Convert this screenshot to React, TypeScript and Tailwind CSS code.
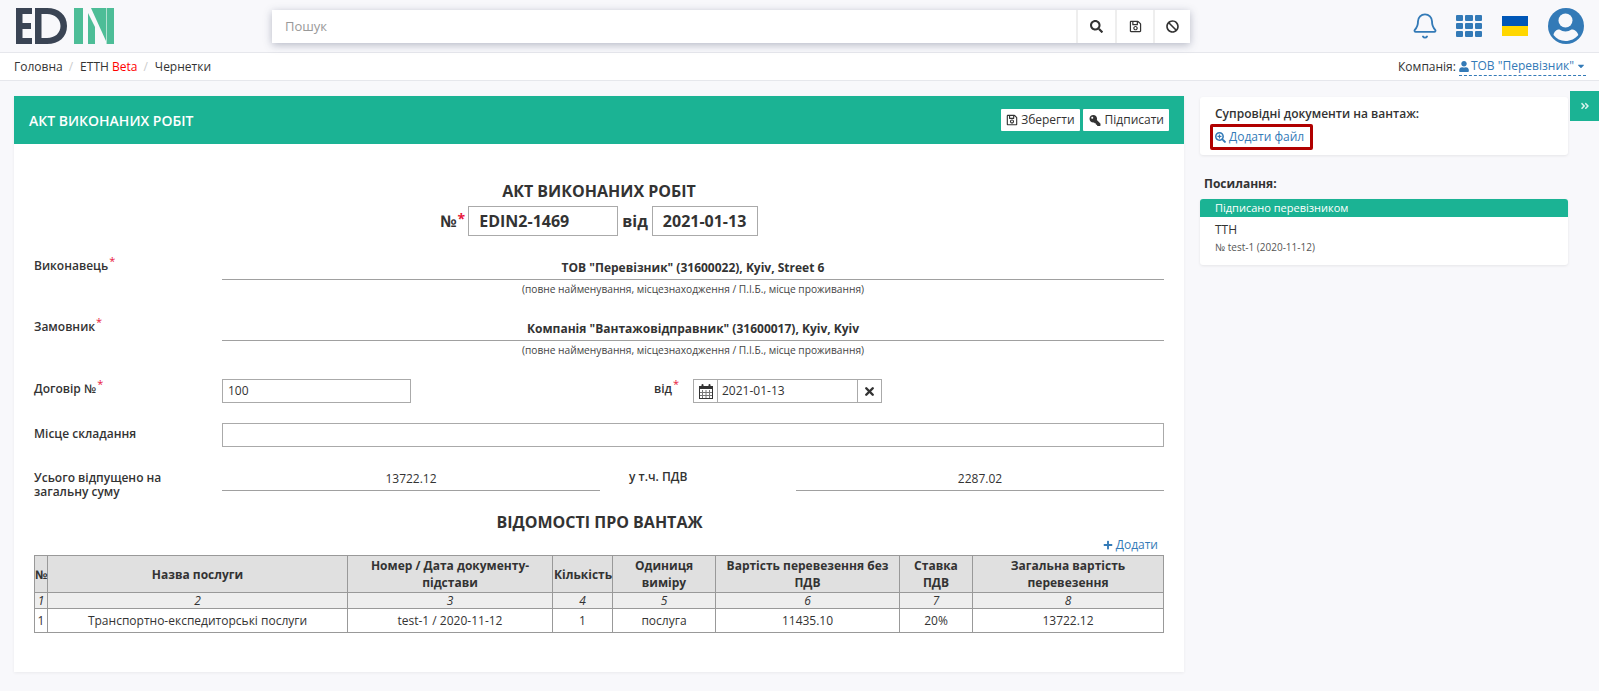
import { FaSearch, FaRegSave, FaBan, FaUser, FaKey, FaSearchPlus, FaPlus, FaAngleDoubleRight, FaCaretDown } from 'react-icons/fa';
import { Bell, X } from 'lucide-react';

const Star = () => <sup className="text-[#e8173c] text-[11px] font-normal ml-px relative -top-[5px]">*</sup>;

function Logo() {
    return (
        <svg width="98" height="36" viewBox="0 0 98 36" className="shrink-0">
            <g fill="#3a4454">
                <rect x="0" y="0" width="6.500" height="36" />
                <rect x="0" y="0" width="16" height="6" />
                <rect x="0" y="15" width="15" height="6" />
                <rect x="0" y="30" width="16" height="6" />
                <path d="M19 0h12c12 0 20 7 20 18s-8 18-20 18H19zM25.500 6v24H31c8 0 13.500-5 13.500-12S39 6 31 6z" />
            </g>
            <g fill="#4dbd97">
                <rect x="58" y="0" width="9" height="36" />
                <path d="M72 5l7 14v17h-7z" />
                <path d="M75 0h15v33z" />
                <rect x="90.600" y="0" width="7.400" height="36" />
            </g>
        </svg>
    );
}

function AppsGrid() {
    return (
        <div className="grid grid-cols-3 gap-[2px] w-[26px]">
            {Array.from({ length: 9 }).map((_, i) => (
                <div key={i} className="h-[6px] bg-[#337ab7] rounded-[1px]" />
            ))}
        </div>
    );
}

function Avatar() {
    return (
        <svg width="36" height="36" viewBox="0 0 36 36" className="shrink-0">
            <circle cx="18" cy="18" r="18" fill="#337ab7" />
            <circle cx="17.500" cy="12.500" r="7" fill="#f8f8fb" />
            <path d="M5.500 27c.5-3.500 3-5.500 6-5.500 1.800 1.300 3.800 2 6 2s4.200-.7 6-2c3 0 6 2 6.800 5.500-3 3.800-7.800 6-12.800 6s-9-2.200-12-6z" fill="#f8f8fb" />
        </svg>
    );
}

function CalendarIcon() {
    return (
        <svg width="14" height="15" viewBox="0 0 14 15" className="shrink-0">
            <rect x="0.500" y="2.500" width="13" height="12" fill="#fff" stroke="#333" />
            <rect x="0.500" y="2.500" width="13" height="2" fill="#333" stroke="#333" />
            <rect x="2.500" y="0" width="2" height="4" rx="1" fill="#333" />
            <rect x="9.500" y="0" width="2" height="4" rx="1" fill="#333" />
            <path d="M3.500 6v8M7 6v8M10.500 6v8M1 8.500h12M1 11.500h12" stroke="#777" strokeWidth="1" fill="none" />
        </svg>
    );
}

const columns = [
    { title: 'Назва послуги', w: 'w-[300px]' },
    { title: 'Номер / Дата документу-підстави', w: 'w-[205px]' },
    { title: 'Кількість', w: 'w-[60px]' },
    { title: 'Одиниця виміру', w: 'w-[103px]' },
    { title: 'Вартість перевезення без ПДВ', w: 'w-[184px]' },
    { title: 'Ставка ПДВ', w: 'w-[73px]' },
    { title: 'Загальна вартість перевезення', w: 'w-[191px]' },
];

const row = ['Транспортно-експедиторські послуги', 'test-1 / 2020-11-12', '1', 'послуга', '11435.10', '20%', '13722.12'];

function PartyRow({ label, value }: { label: string; value: string }) {
    return (
        <div className="flex h-[61px]">
            <div className="w-[188px] font-semibold pt-[2px] shrink-0">{label}<Star /></div>
            <div className="flex-1 text-center">
                <div className="font-bold border-b border-[#a0a0a0] h-[25px] leading-[22px] pt-[2px]">{value}</div>
                <div className="text-[10.200px] text-[#444] leading-[19px]">(повне найменування, місцезнаходження / П.І.Б., місце проживання)</div>
            </div>
        </div>
    );
}

export default function App() {
    return (
        <div className="relative min-h-[691px] bg-[#f8f8fb] text-[#333] text-[12px] overflow-hidden" style={{ fontFamily: '"Open Sans", "Noto Sans", sans-serif' }}>
            {/* Header */}
            <header className="h-[53px] flex items-center border-b border-[#e6e7ec] pl-[16px] pr-[15px]">
                <Logo />
                <div className="ml-[158px] w-[918px] h-[33px] bg-white flex shadow-[0_2px_8px_rgba(60,70,100,0.35)] text-[13px]">
                    <div className="flex-1 pl-[13px] text-[#999] leading-[33px]">Пошук</div>
                    <div className="w-[39px] border-l-2 border-[#eee] flex items-center justify-center text-[#333]"><FaSearch className="w-[13px] h-[13px]" /></div>
                    <div className="w-[38px] border-l-2 border-[#eee] flex items-center justify-center text-[#333]"><FaRegSave className="w-[13px] h-[13px]" /></div>
                    <div className="w-[37px] border-l-2 border-[#eee] flex items-center justify-center text-[#333]"><FaBan className="w-[13px] h-[13px]" /></div>
                </div>
                <div className="ml-auto flex items-center">
                    <Bell className="w-[28px] h-[30px] text-[#337ab7] mr-[17px]" strokeWidth={1.6} />
                    <AppsGrid />
                    <div className="ml-[20px] mr-[20px] w-[26px] h-[20px] flex flex-col">
                        <div className="h-[10px] bg-[#0057b7]" />
                        <div className="h-[10px] bg-[#ffd700]" />
                    </div>
                    <Avatar />
                </div>
            </header>

            {/* Breadcrumbs */}
            <div className="h-[28px] bg-white border-b border-[#e6e7ec] flex items-center justify-between pl-[14px] pr-[13px]">
                <div className="flex items-center">
                    <span>Головна</span>
                    <span className="text-[#ccc] mx-[6px]">/</span>
                    <span className="ml-[1px]">ЕТТН <span className="text-[#f00]">Beta</span></span>
                    <span className="text-[#ccc] mx-[6px]">/</span>
                    <span className="ml-[1px]">Чернетки</span>
                </div>
                <div className="flex items-center">
                    <span>Компанія:</span>
                    <span className="ml-[3px] text-[#337ab7] border-b border-dashed border-[#337ab7] flex items-center h-[19px]">
                        <FaUser className="w-[10px] h-[11px] mr-[2px]" />
                        ТОВ "Перевізник"
                        <FaCaretDown className="w-[10px] h-[10px] ml-[2px]" />
                    </span>
                </div>
            </div>

            {/* Side toggle */}
            <div className="absolute right-0 top-[91px] w-[29px] h-[30px] bg-[#1bb394] flex items-center justify-center text-[#d8f3ec]">
                <FaAngleDoubleRight className="w-[10px] h-[10px]" />
            </div>

            <main className="flex items-start pt-[15px] pl-[14px] gap-[16px]">
                {/* Act panel */}
                <section className="w-[1170px] h-[576px] bg-white shadow-[0_1px_3px_rgba(0,0,0,0.06)]">
                    <div className="h-[48px] bg-[#1bb394] flex items-center justify-between pl-[15px] pr-[15px]">
                        <h1 className="text-white text-[14px] font-semibold">АКТ ВИКОНАНИХ РОБІТ</h1>
                        <div className="flex gap-[3px]">
                            <button className="h-[22px] px-[5px] bg-white rounded-[1px] flex items-center gap-[3px]"><FaRegSave className="w-[12px] h-[12px]" />Зберегти</button>
                            <button className="h-[22px] px-[5px] bg-white rounded-[1px] flex items-center gap-[3px]"><FaKey className="w-[14px] h-[11px] -scale-x-100" />Підписати</button>
                        </div>
                    </div>

                    <div className="pl-[20px] pr-[20px]">
                        <h2 className="text-[16px] font-bold text-center mt-[36px] leading-[22px]">АКТ ВИКОНАНИХ РОБІТ</h2>
                        <div className="flex items-center justify-center text-[16px] font-bold h-[30px] mt-[4px]">
                            <span>№</span>
                            <sup className="text-[#e8173c] text-[14px] font-bold relative top-[-2px] ml-[1px]">*</sup>
                            <div className="ml-[3px] w-[150px] h-[30px] border border-[#aaa] pl-[10px] leading-[28px]">EDIN2-1469</div>
                            <span className="ml-[4px]">від</span>
                            <div className="ml-[4px] w-[106px] h-[30px] border border-[#aaa] pl-[10px] leading-[28px]">2021-01-13</div>
                        </div>

                        <div className="mt-[19px]">
                            <PartyRow label="Виконавець" value='ТОВ "Перевізник" (31600022), Kyiv, Street 6' />
                            <PartyRow label="Замовник" value='Компанія "Вантажовідправник" (31600017), Kyiv, Kyiv' />
                        </div>

                        <div className="flex items-center h-[24px] mt-[2px]">
                            <div className="w-[188px] font-semibold pb-[4px]">Договір №<Star /></div>
                            <div className="w-[189px] h-[24px] border border-[#aaa] pl-[5px] leading-[22px]">100</div>
                            <div className="ml-[243px] w-[39px] font-semibold pb-[4px]">від<Star /></div>
                            <div className="w-[189px] h-[24px] border border-[#aaa] flex items-center">
                                <div className="w-[24px] h-full flex items-center justify-center border-r border-[#aaa]"><CalendarIcon /></div>
                                <div className="flex-1 pl-[4px]">2021-01-13</div>
                                <div className="w-[24px] h-full flex items-center justify-center border-l border-[#aaa]"><X className="w-[13px] h-[13px]" strokeWidth={4.5} /></div>
                            </div>
                        </div>

                        <div className="flex items-center h-[24px] mt-[20px]">
                            <div className="w-[188px] font-semibold pb-[3px]">Місце складання</div>
                            <div className="flex-1 h-[24px] border border-[#aaa]" />
                        </div>

                        <div className="flex h-[34px] mt-[18px]">
                            <div className="w-[188px] font-semibold leading-[13.500px] pt-[6px] shrink-0">Усього відпущено на<br />загальну суму</div>
                            <div className="w-[378px] h-[26px] border-b border-[#a0a0a0] text-center leading-[27px] mr-[29px]">13722.12</div>
                            <div className="w-[167px] font-semibold leading-[16px] pt-[4px]">у т.ч. ПДВ</div>
                            <div className="flex-1 h-[26px] border-b border-[#a0a0a0] text-center leading-[27px]">2287.02</div>
                        </div>

                        <h2 className="text-[16px] font-bold text-center leading-[22px] mt-[12px] ml-[1px]">ВІДОМОСТІ ПРО ВАНТАЖ</h2>
                        <div className="flex justify-end pr-[6px] h-[22px] items-end pb-[1px] text-[#337ab7]">
                            <span className="flex items-center gap-[3px]"><FaPlus className="w-[10px] h-[10px]" />Додати</span>
                        </div>

                        <table className="w-full border-collapse table-fixed border border-[#999] leading-[17px]">
                            <thead>
                                <tr className="bg-[#e0e0e0] h-[37px]">
                                    <th className="w-[13px] border border-[#999] font-bold p-0">№</th>
                                    {columns.map(c => (
                                        <th key={c.title} className={`${c.w} border border-[#999] font-bold p-0 px-[1px]`}>{c.title}</th>
                                    ))}
                                </tr>
                                <tr className="bg-[#eeeeee] h-[16px] leading-[15px]">
                                    {[1, 2, 3, 4, 5, 6, 7, 8].map(n => (
                                        <td key={n} className="border border-[#999] text-center italic p-0">{n}</td>
                                    ))}
                                </tr>
                            </thead>
                            <tbody>
                                <tr className="h-[24px]">
                                    <td className="border border-[#999] text-center p-0">1</td>
                                    {row.map(v => (
                                        <td key={v} className="border border-[#999] text-center p-0">{v}</td>
                                    ))}
                                </tr>
                            </tbody>
                        </table>
                    </div>
                </section>

                {/* Right column */}
                <aside className="w-[368px] pt-[1px]">
                    <div className="h-[58px] bg-white rounded-[3px] shadow-[0_1px_3px_rgba(0,0,0,0.08)] pl-[15px] pt-[8px]">
                        <div className="font-semibold leading-[18px]">Супровідні документи на вантаж:</div>
                        <div className="mt-[1px] ml-[-5px] w-[103px] h-[26px] border-[3px] border-[#b00000] rounded-[2px] flex items-center pl-[2px] text-[#337ab7] gap-[3px]">
                            <FaSearchPlus className="w-[11px] h-[11px]" />Додати файл
                        </div>
                    </div>
                    <div className="font-bold mt-[20px] ml-[4px] leading-[18px]">Посилання:</div>
                    <div className="mt-[6px] bg-white rounded-[3px] shadow-[0_1px_3px_rgba(0,0,0,0.08)] h-[66px] overflow-hidden">
                        <div className="h-[18px] bg-[#1bb394] text-white text-[11px] leading-[18px] pl-[15px]">Підписано перевізником</div>
                        <div className="pl-[15px] pt-[4px] leading-[18px]">ТТН</div>
                        <div className="pl-[15px] text-[10px] text-[#555] leading-[16px]">№ test-1 (2020-11-12)</div>
                    </div>
                </aside>
            </main>
        </div>
    );
}
